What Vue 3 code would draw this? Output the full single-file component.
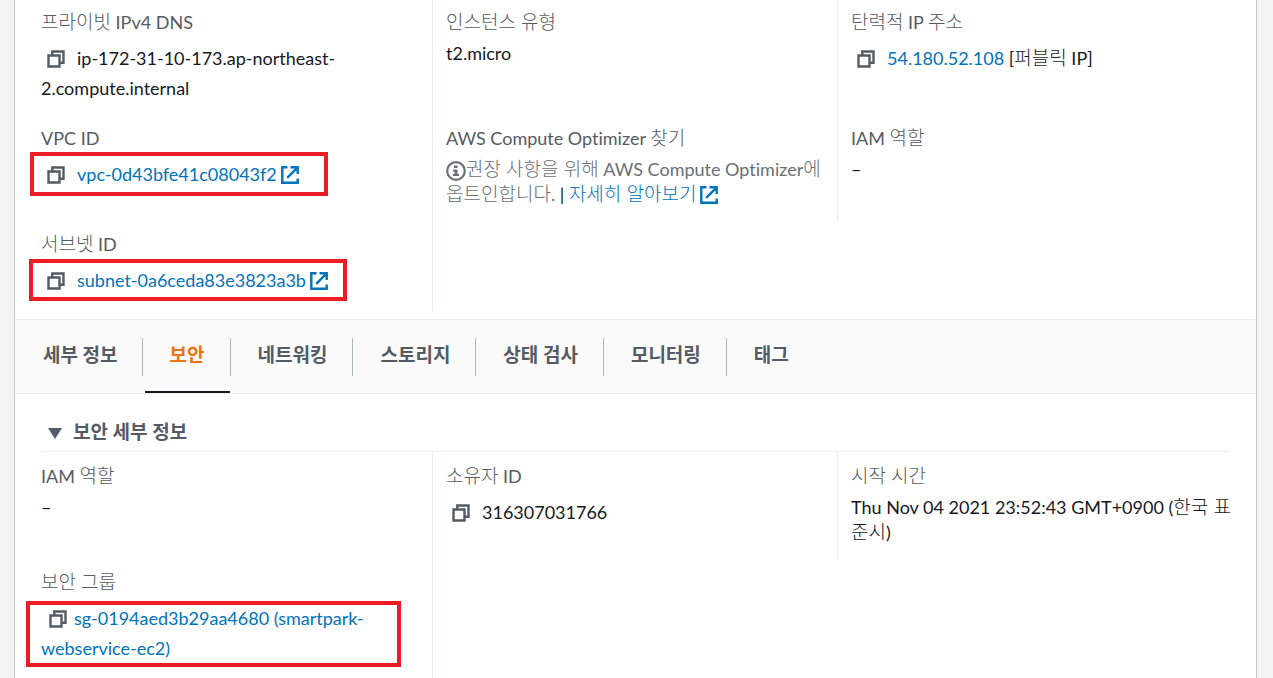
<script setup>
import { ref, h } from 'vue'

const tabs = ['세부 정보', '보안', '네트워킹', '스토리지', '상태 검사', '모니터링', '태그']
const active = ref('보안')
const open = ref(true)

const svg = (children) =>
  h('svg', { class: 'icon', viewBox: '0 0 18 18', width: 18, height: 18, fill: 'none', stroke: 'currentColor', 'stroke-width': 2.4, 'aria-hidden': 'true' }, children)

const CopyIcon = () =>
  svg([h('path', { d: 'M1.500 5.500h11v11h-11z' }), h('path', { d: 'M5.300 5V1.500h11.200v11.200H13' })])

const ExternalIcon = () =>
  svg([h('path', { d: 'M6.500 1.300H1.300v15.400h15.400V12.500' }), h('path', { d: 'M9.500 1.300h7.200V8M16.200 1.800L6.200 11.800' })])
</script>

<template>
  <main class="panel">
    <section class="grid summary">
      <div class="col">
        <div class="item tall">
          <div class="label"><span class="ko">프라이빗</span> IPv4 DNS</div>
          <div class="value copyable">
            <button class="copy" type="button" aria-label="복사"><CopyIcon /></button>ip-172-31-10-173.ap-northeast-2.compute.internal
          </div>
        </div>
        <div class="item">
          <div class="label">VPC ID</div>
          <div class="value copyable marked vpc">
            <button class="copy" type="button" aria-label="복사"><CopyIcon /></button><a href="#">vpc-0d43bfe41c08043f2<ExternalIcon class="ext" /></a>
          </div>
        </div>
        <div class="item">
          <div class="label"><span class="ko">서브넷</span> ID</div>
          <div class="value copyable marked subnet">
            <button class="copy" type="button" aria-label="복사"><CopyIcon /></button><a href="#">subnet-0a6ceda83e3823a3b<ExternalIcon class="ext" /></a>
          </div>
        </div>
      </div>
      <div class="col">
        <div class="item tall">
          <div class="label"><span class="ko">인스턴스 유형</span></div>
          <div class="value">t2.micro</div>
        </div>
        <div class="item">
          <div class="label">AWS Compute Optimizer <span class="ko">찾기</span></div>
          <div class="value muted">
            <svg class="info" viewBox="0 0 20 20" width="20" height="20" aria-hidden="true">
              <circle cx="10" cy="10" r="8.800" fill="none" stroke="currentColor" stroke-width="2.200" />
              <path d="M8 4.500h3.500V7H8zM7 8.500h4.500v4.500H13V15H7v-2h1.500v-2.500H7z" fill="currentColor" />
            </svg><span class="ko">권장 사항을 위해</span> AWS Compute Optimizer<span class="ko">에 옵트인합니다</span>. <span class="bar">|</span> <a href="#"><span class="ko">자세히 알아보기</span><ExternalIcon class="ext" /></a>
          </div>
        </div>
      </div>
      <div class="col">
        <div class="item tall">
          <div class="label"><span class="ko">탄력적</span> IP <span class="ko">주소</span></div>
          <div class="value copyable">
            <button class="copy" type="button" aria-label="복사"><CopyIcon /></button><a href="#">54.180.52.108</a> [<span class="ko">퍼블릭</span> IP]
          </div>
        </div>
        <div class="item">
          <div class="label">IAM <span class="ko">역할</span></div>
          <div class="value">–</div>
        </div>
      </div>
    </section>

    <nav class="tabs" role="tablist">
      <button
        v-for="t in tabs"
        :key="t"
        class="tab"
        :class="{ active: t === active }"
        type="button"
        role="tab"
        :aria-selected="t === active"
        @click="active = t"
      >{{ t }}</button>
    </nav>

    <h2 class="heading">
      <button type="button" :aria-expanded="open" @click="open = !open"><i class="caret"></i>보안 세부 정보</button>
    </h2>

    <section v-if="open" class="grid details">
      <div class="col">
        <div class="item">
          <div class="label">IAM <span class="ko">역할</span></div>
          <div class="value">–</div>
        </div>
        <div class="item">
          <div class="label"><span class="ko">보안 그룹</span></div>
          <div class="value copyable marked group">
            <button class="copy" type="button" aria-label="복사"><CopyIcon /></button><a href="#">sg-0194aed3b29aa4680 (smartpark-webservice-ec2)</a>
          </div>
        </div>
      </div>
      <div class="col">
        <div class="item">
          <div class="label"><span class="ko">소유자</span> ID</div>
          <div class="value copyable">
            <button class="copy" type="button" aria-label="복사"><CopyIcon /></button>316307031766
          </div>
        </div>
      </div>
      <div class="col">
        <div class="item">
          <div class="label"><span class="ko">시작 시간</span></div>
          <div class="value">Thu Nov 04 2021 23:52:43 GMT+0900 (<span class="ko">한국 표준시</span>)</div>
        </div>
      </div>
    </section>
  </main>
</template>

<style>
body {
  margin: 0;
  background: #f2f3f3;
}
</style>

<style scoped>
.panel {
  box-sizing: border-box;
  min-height: 100vh;
  margin: 0 16px 0 14px;
  border: solid #c3c7c9;
  border-width: 0 1px;
  background: #fff;
  color: #16191f;
  font: 18px/25px Lato, "Noto Sans CJK KR", sans-serif;
  font-variant-ligatures: none;
}
.grid {
  display: grid;
  grid-template-columns: repeat(3, 1fr);
  align-items: start;
  margin: 0 13px;
}
.col {
  min-width: 0;
  padding: 10px 4px 16px 13px;
  border-right: 1px solid #eaeded;
}
.col:nth-child(2) {
  padding-bottom: 14px;
}
.col:last-child {
  border-right: 0;
}
.details .col {
  padding-top: 12px;
}
.item {
  min-height: 84px;
  margin-bottom: 22px;
}
.item.tall {
  min-height: 94px;
}
.item:last-child {
  min-height: 0;
  margin-bottom: 0;
}
.details .item:last-child {
  min-height: 80px;
}
.label {
  color: #545b64;
}
.value {
  margin-top: 6px;
}
.copyable {
  margin-top: 8px;
  line-height: 30px;
}
.muted {
  color: #687078;
}
.bar {
  color: #16191f;
}
.ko {
  font-size: 19px;
  font-weight: 300;
  line-height: 1;
  word-break: break-all;
}
a {
  color: #0073bb;
  text-decoration: none;
}
button {
  padding: 0;
  border: 0;
  background: none;
  color: #545b64;
  font: inherit;
  cursor: pointer;
}
.copy {
  height: 18px;
  margin: 0 12px 0 6px;
  line-height: 18px;
  vertical-align: -3px;
}
.icon {
  display: block;
}
.ext {
  display: inline-block;
  margin-left: 4px;
  vertical-align: -3px;
}
.info {
  vertical-align: -5px;
}
.marked {
  position: relative;
  width: fit-content;
}
.marked::after {
  content: "";
  position: absolute;
  inset: -7px -29px -7px -11px;
  border: 4px solid #ed1c24;
  pointer-events: none;
}
.subnet::after {
  inset: -6px -19px -6px -12px;
}
.group {
  width: auto;
}
.group::after {
  inset: -2px 27px -4px -15px;
}
.group .copy {
  margin: 0 7px 0 8px;
}
.tabs {
  display: flex;
  height: 73px;
  margin-top: 8px;
  padding-left: 2px;
  border: solid #eaeded;
  border-width: 1px 0;
  background: #fafafa;
}
.tab {
  position: relative;
  padding: 0 26px 4px 27px;
  color: #545b64;
  font-size: 19px;
  font-weight: 700;
}
.tab:first-child {
  padding: 0 25px 4px 26px;
}
.tab:not(:last-child)::before {
  content: "";
  position: absolute;
  top: 18px;
  right: 0;
  height: 38px;
  border-right: 1px solid #aab7b8;
}
.tab.active {
  color: #ec7211;
}
.tab.active::after {
  content: "";
  position: absolute;
  left: 2px;
  right: 1px;
  bottom: 0;
  height: 2px;
  background: #16191f;
}
.heading {
  margin: 0 26px;
  padding: 25px 0 6px;
  border-bottom: 1px solid #eaeded;
  font-size: 19px;
  line-height: 26px;
}
.heading button {
  display: flex;
  align-items: center;
}
.caret {
  margin: 2px 11px 0 7px;
  border: 7px solid transparent;
  border-top: 11px solid #545b64;
  border-bottom: 0;
}
</style>
